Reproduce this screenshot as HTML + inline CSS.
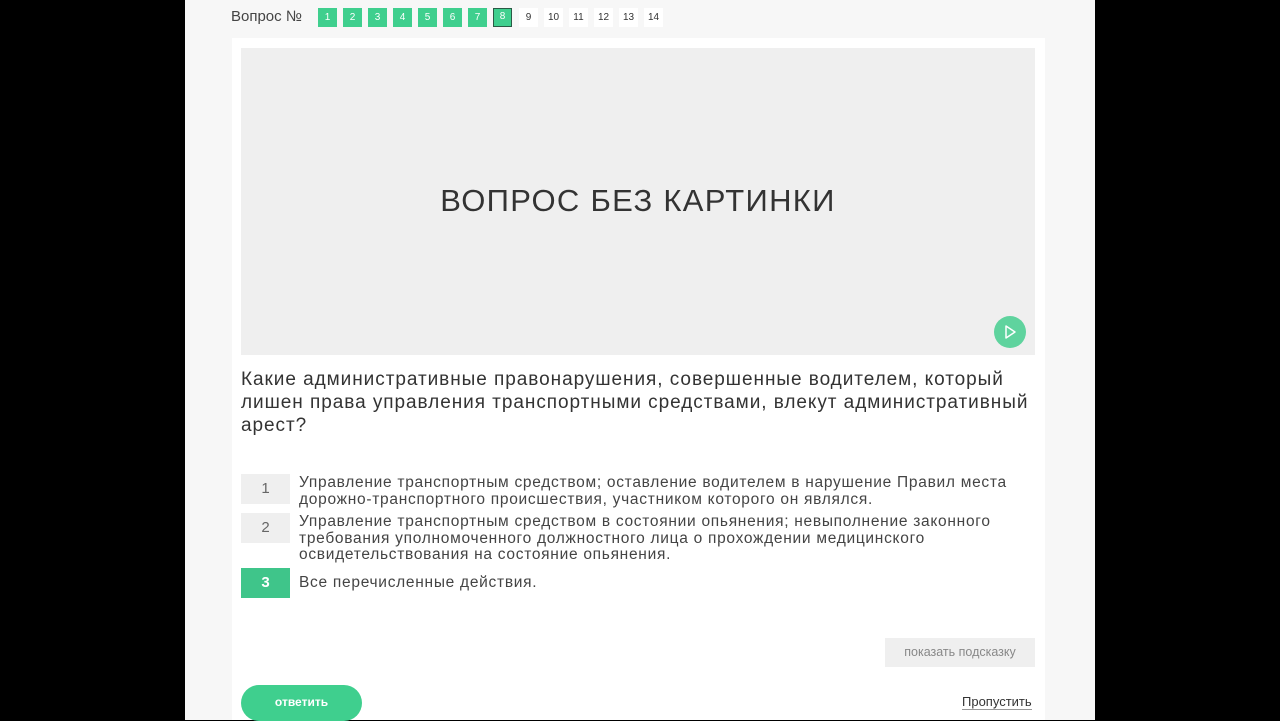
<!DOCTYPE html>
<html><head><meta charset="utf-8"><style>
*{margin:0;padding:0;box-sizing:border-box}
body{width:1280px;height:720px;background:#000;font-family:"Liberation Sans",sans-serif;overflow:hidden;position:relative}
.page{position:absolute;left:185px;top:0;width:910px;height:720px;background:#f7f7f7}
.card{position:absolute;left:232px;top:38px;width:813px;height:682px;background:#fff}
.abs{position:absolute}
.nl{position:absolute;top:8px;width:19px;height:19px;font-size:10px;line-height:19px;text-align:center;color:#333;background:#fff}
.nl.g{background:#3fcf8e;color:#fff}
.img{left:241px;top:48px;width:794px;height:307px;background:#efefef}
.q{left:241px;top:368px;font-size:19px;line-height:23px;color:#333;letter-spacing:0.95px;white-space:nowrap}
.num{position:absolute;left:241px;width:49px;height:30px;background:#efefef;color:#666;font-size:15px;line-height:30px;text-align:center}
.ans{position:absolute;left:299px;font-size:15.5px;line-height:16.5px;color:#444;letter-spacing:0.72px;white-space:nowrap}
</style></head><body>
<div class="page"></div>
<div class="card"></div>
<div class="abs" style="left:231px;top:8px;font-size:15px;color:#444">Вопрос №</div>
<div class="nl g" style="left:318px">1</div>
<div class="nl g" style="left:343px">2</div>
<div class="nl g" style="left:368px">3</div>
<div class="nl g" style="left:393px">4</div>
<div class="nl g" style="left:418px">5</div>
<div class="nl g" style="left:443px">6</div>
<div class="nl g" style="left:468px">7</div>
<div class="nl g" style="left:493px;border:1.5px solid #2a5a45;line-height:16px">8</div>
<div class="nl" style="left:519px">9</div>
<div class="nl" style="left:544px">10</div>
<div class="nl" style="left:569px">11</div>
<div class="nl" style="left:594px">12</div>
<div class="nl" style="left:619px">13</div>
<div class="nl" style="left:644px">14</div>
<div class="abs img"></div>
<div class="abs" style="left:241px;width:794px;top:183px;text-align:center;font-size:31px;color:#333;letter-spacing:1.3px">ВОПРОС БЕЗ КАРТИНКИ</div>
<div class="abs" style="left:994px;top:316px;width:32px;height:32px;border-radius:50%;background:#5fd39e">
<svg width="32" height="32" viewBox="0 0 32 32"><path d="M12 10 L21 16 L12 22 Z" fill="none" stroke="#fff" stroke-width="1.5" stroke-linejoin="round"/></svg></div>
<div class="abs q">Какие административные правонарушения, совершенные водителем, который<br>лишен права управления транспортными средствами, влекут административный<br>арест?</div>
<div class="num" style="top:474px">1</div>
<div class="ans" style="top:475px">Управление транспортным средством; оставление водителем в нарушение Правил места<br>дорожно-транспортного происшествия, участником которого он являлся.</div>
<div class="num" style="top:513px">2</div>
<div class="ans" style="top:514px">Управление транспортным средством в состоянии опьянения; невыполнение законного<br>требования уполномоченного должностного лица о прохождении медицинского<br>освидетельствования на состояние опьянения.</div>
<div class="num" style="top:568px;background:#3fc58a;color:#fff;font-weight:bold">3</div>
<div class="ans" style="top:575px">Все перечисленные действия.</div>
<div class="abs" style="left:885px;top:638px;width:150px;height:29px;background:#efefef;color:#888;font-size:12.5px;line-height:29px;text-align:center">показать подсказку</div>
<div class="abs" style="left:241px;top:685px;width:121px;height:36px;border-radius:18px;background:#3fcf8e;color:#fff;font-size:12px;font-weight:bold;line-height:34px;text-align:center">ответить</div>
<div class="abs" style="left:962px;top:694px;font-size:13px;color:#333;border-bottom:1px solid #999;line-height:15px">Пропустить</div>
</body></html>
